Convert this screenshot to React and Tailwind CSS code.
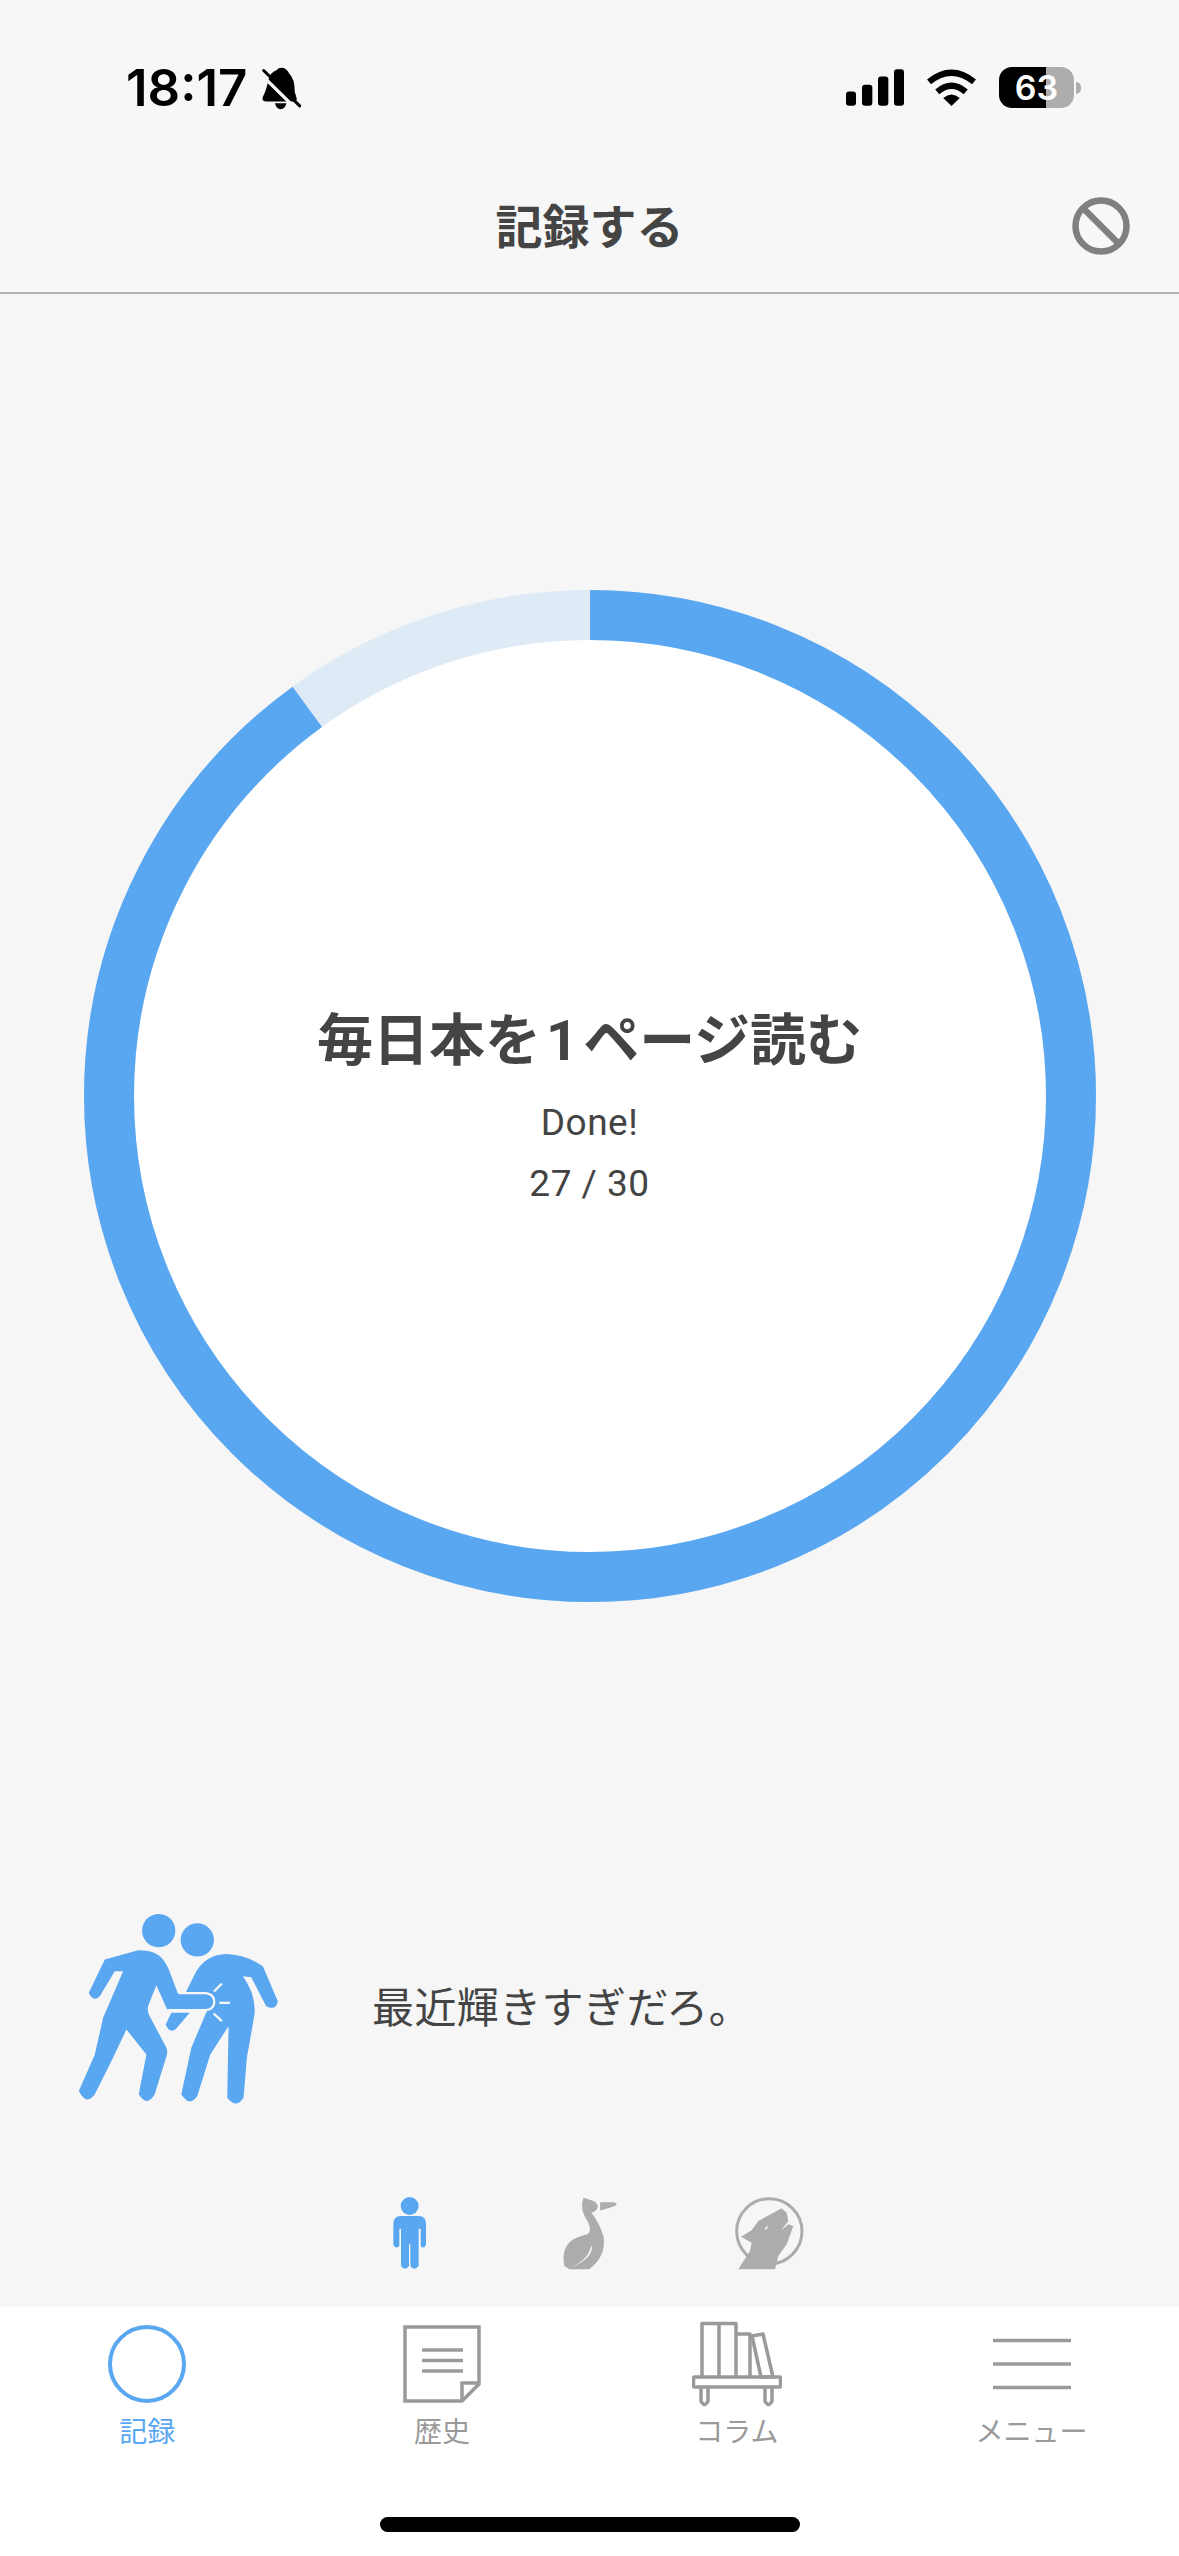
const BLUE = "#5aa7f1";
const GRAY = "#acacac";
const TAB_GRAY = "#9a9a9a";
const BG = "#f6f6f6";

const BellOff = () => (
    <svg viewBox="543 78 124 132" className="w-[41px] h-[44px] ml-[14px]">
        <path d="M605 83Q620 83 628 100Q645 115 645 155L650 172Q655 185 640 185H560Q545 185 548 172Q560 150 565 120Q572 95 590 90Q595 83 605 83Z" fill="#000" />
        <path d="M585 190H620Q615 208 602 208Q590 208 585 190Z" fill="#000" />
        <path d="M540 100L650 208" stroke={BG} strokeWidth="10" />
        <path d="M551 91L660 198" stroke="#000" strokeWidth="9" strokeLinecap="round" />
    </svg>
);

const Signal = () => (
    <svg viewBox="138 88 174 110" className="w-[58px] h-[37px]">
        <rect x="138" y="155" width="30" height="43" rx="9" />
        <rect x="186" y="135" width="31" height="63" rx="9" />
        <rect x="234" y="110" width="31" height="88" rx="9" />
        <rect x="282" y="88" width="30" height="110" rx="9" />
    </svg>
);

const Wifi = () => (
    <svg viewBox="378 86 154 112" className="w-[51px] h-[37px] ml-[22px]">
        <path d="M387 125Q455 70 523 125" fill="none" stroke="#000" strokeWidth="19" />
        <path d="M412 155Q455 118 498 155" fill="none" stroke="#000" strokeWidth="19" />
        <path d="M430 174Q455 152 480 174L455 198Z" fill="#000" />
    </svg>
);

const Battery = () => (
    <div className="flex items-center ml-[22px]">
        <div className="w-[75px] h-[41px] rounded-[13px] bg-[linear-gradient(90deg,#000_0,#000_62.5%,#adadad_62.5%,#adadad_100%)] flex items-center justify-center text-white text-[34px] leading-none font-semibold font-['Inter',sans-serif]">
            63
        </div>
        <div className="w-[5px] h-[12px] ml-[2px] rounded-r-full bg-[#adadad]"></div>
    </div>
);

const BanIcon = () => (
    <svg viewBox="0 0 58 58" className="w-[58px] h-[58px]" fill="none" stroke="#808080" strokeWidth="6.5">
        <circle cx="29" cy="29" r="25.5" />
        <path d="M11 11L47 47" />
    </svg>
);

const FightFigure = () => (
    <svg viewBox="85 68 603 577" className="w-[201px] h-[192px]" fill={BLUE}>
        <circle cx="327" cy="118" r="50" />
        <circle cx="443" cy="146" r="50" />
        {/* right man */}
        <path d="M405 310L440 240Q470 190 530 188Q590 190 640 225L685 330Q680 360 650 345L605 258L580 255Q620 310 615 370L592 500L582 620Q560 655 533 620L537 405L482 490L443 615Q420 650 395 610L425 470L480 340Z" />
        <path d="M365 365H420L380 412Q360 430 348 400Z" />
        {/* left man */}
        <path d="M385 308H470Q492 312 492 332Q492 352 470 354H352L320 282L295 345Q292 362 300 375L350 470Q354 480 352 490L315 610Q292 650 267 610L290 490L230 415L185 510L135 610Q110 645 87 600L135 490L160 380L220 240L195 240L150 315Q130 335 117 305L165 205L265 177Q320 177 340 205Q355 225 365 255Z" />
        <path d="M388 306H470Q494 310 494 332Q494 354 470 357H356" fill="none" stroke={BG} strokeWidth="7" />
        <g stroke={BG} strokeWidth="7" fill="none">
            <path d="M493 301L517 277" />
            <path d="M509 335H541" />
            <path d="M492 367L517 390" />
        </g>
    </svg>
);

const PersonIcon = () => (
    <svg viewBox="95 75 105 225" className="w-[35px] h-[75px]" fill={BLUE}>
        <circle cx="148" cy="105" r="27" />
        <path d="M122 135H175Q197 135 197 158V222Q190 236 181 224V173H175V285Q162 302 150 285V220H146V285Q134 302 122 285V173H117V224Q108 236 99 222V158Q99 135 122 135Z" />
    </svg>
);

const BirdIcon = () => (
    <svg viewBox="600 75 175 225" className="w-[58px] h-[75px]" fill={GRAY}>
        <path d="M668 80Q685 85 700 90Q712 98 711 110Q705 122 692 125Q715 155 728 195Q738 255 685 295H625L610 285Q600 235 630 210Q650 197 680 190Q695 180 680 150Q655 115 668 80Z" />
        <path d="M718 93L760 93Q772 97 765 103Q745 112 718 118Z" />
        <path d="M693 224Q698 262 628 292Q675 268 686 240Q689 230 693 224Z" fill={BG} />
    </svg>
);

const WolfIcon = () => (
    <svg viewBox="1122 75 213 225" className="w-[71px] h-[75px]" fill={GRAY}>
        <circle cx="1228" cy="181" r="98" fill="none" stroke={GRAY} strokeWidth="9" />
        <path d="M1135 295L1170 240L1175 215L1143 197L1175 178L1195 150L1265 112L1280 125L1285 150L1262 180L1285 160L1300 165L1280 220L1255 255L1245 295Z" />
        <path d="M1212 175L1224 163L1221 175Z" fill={BG} />
    </svg>
);

const CircleTab = () => (
    <svg viewBox="0 0 78 78" className="w-[78px] h-[78px]" fill="none" stroke={BLUE} strokeWidth="4">
        <circle cx="39" cy="39" r="37" />
    </svg>
);

const NoteTab = () => (
    <svg viewBox="0 0 78 78" className="w-[78px] h-[78px]" fill="none" stroke={TAB_GRAY} strokeWidth="3.5">
        <path d="M2 2H76V59L59 76H2Z" />
        <path d="M59 76V58H76" />
        <path d="M19 25H60M19 35.500H60M19 46H60" />
    </svg>
);

const ShelfTab = () => (
    <svg viewBox="0 0 90 86" className="w-[90px] h-[86px]" fill="none" stroke={TAB_GRAY} strokeWidth="3.5" strokeLinejoin="round">
        <path d="M10 56V2.500H44V56M27 2.500V56" />
        <path d="M44 13H58V56" />
        <path d="M60 15L71 13L81 56H69Z" />
        <rect x="1.500" y="56" width="87" height="10" rx="1" />
        <path d="M9 66V80Q12.500 87 16 80V66M73 66V80Q76.500 87 80 80V66" />
    </svg>
);

const MenuTab = () => (
    <svg viewBox="0 0 78 78" className="w-[78px] h-[78px]" stroke={TAB_GRAY} strokeWidth="3.5">
        <path d="M0 15.500H78M0 39H78M0 62.500H78" />
    </svg>
);

const tabs = [
    { label: "記録", icon: <CircleTab />, active: true },
    { label: "歴史", icon: <NoteTab /> },
    { label: "コラム", icon: <ShelfTab /> },
    { label: "メニュー", icon: <MenuTab /> },
];

const App = () => {
    return (
        <div className="w-[1179px] h-[2556px] flex flex-col bg-[#f6f6f6] text-[#444444] font-['Noto_Sans_CJK_JP',sans-serif] overflow-hidden">
            {/* Status bar + header */}
            <div className="h-[294px] shrink-0 flex flex-col bg-[#f7f7f7] border-b-2 border-[#b4b4b4]">
                <div className="h-[158px] shrink-0 flex justify-between pt-[67px] pl-[126px] pr-[98px]">
                    <div className="flex items-center h-[41px]">
                        <span className="text-[51px] leading-none font-semibold text-black font-['Inter',sans-serif]">18:17</span>
                        <BellOff />
                    </div>
                    <div className="flex items-center h-[41px]">
                        <Signal />
                        <Wifi />
                        <Battery />
                    </div>
                </div>
                <div className="flex-1 relative flex items-center justify-center">
                    <h1 className="pb-[3px] text-[47px] leading-none font-semibold">記録する</h1>
                    <div className="absolute right-[49px] top-[39px]">
                        <BanIcon />
                    </div>
                </div>
            </div>

            {/* Progress ring */}
            <div className="mt-[296px] mx-auto relative w-[1012px] h-[1012px] shrink-0">
                <svg viewBox="0 0 1012 1012" className="w-full h-full -rotate-90" fill="none" strokeWidth="50">
                    <circle cx="506" cy="506" r="481" fill="#ffffff" stroke="#deeaf6" />
                    <circle cx="506" cy="506" r="481" stroke={BLUE} pathLength="100" strokeDasharray="90 10" />
                </svg>
                <div className="absolute inset-0 pt-[22px] flex flex-col items-center justify-center">
                    <h2 className="h-[72px] leading-[72px] text-[56px] font-bold font-['Roboto','Noto_Sans_CJK_JP',sans-serif]">
                        毎日本を<span className="mx-[5px]">1</span>ページ読む
                    </h2>
                    <p className="mt-[21px] h-[50px] leading-[50px] text-[37px] tracking-[0.5px] font-['Roboto',sans-serif]">Done!</p>
                    <p className="mt-[11px] h-[50px] leading-[50px] text-[37px] tracking-[0.5px] font-['Roboto',sans-serif]">27 / 30</p>
                </div>
            </div>

            {/* Character message */}
            <div className="mt-[312px] flex items-center pl-[78px] shrink-0">
                <FightFigure />
                <p className="ml-[93px] pb-[10px] text-[42px] tracking-[0.4px] leading-none">最近輝きすぎだろ。</p>
            </div>

            {/* Character picker */}
            <div className="mt-[90px] flex justify-center shrink-0">
                <div className="w-[180px] flex justify-center"><PersonIcon /></div>
                <div className="w-[180px] flex justify-center"><BirdIcon /></div>
                <div className="w-[180px] flex justify-center"><WolfIcon /></div>
            </div>

            {/* Tab bar */}
            <div className="mt-[36px] flex-1 bg-white flex flex-col">
                <div className="grid grid-cols-4 pt-[14px]">
                    {tabs.map((tab) => (
                        <div key={tab.label} className="flex flex-col items-center">
                            <div className="h-[86px] flex items-center justify-center">{tab.icon}</div>
                            <span className={tab.active ? "mt-[5px] text-[28px] leading-[36px] text-[#5aa7f1]" : "mt-[5px] text-[28px] leading-[36px] text-[#9a9a9a]"}>
                                {tab.label}
                            </span>
                        </div>
                    ))}
                </div>
                <div className="mt-auto mb-[24px] mx-auto w-[420px] h-[15px] rounded-full bg-black"></div>
            </div>
        </div>
    );
};

export default App;
